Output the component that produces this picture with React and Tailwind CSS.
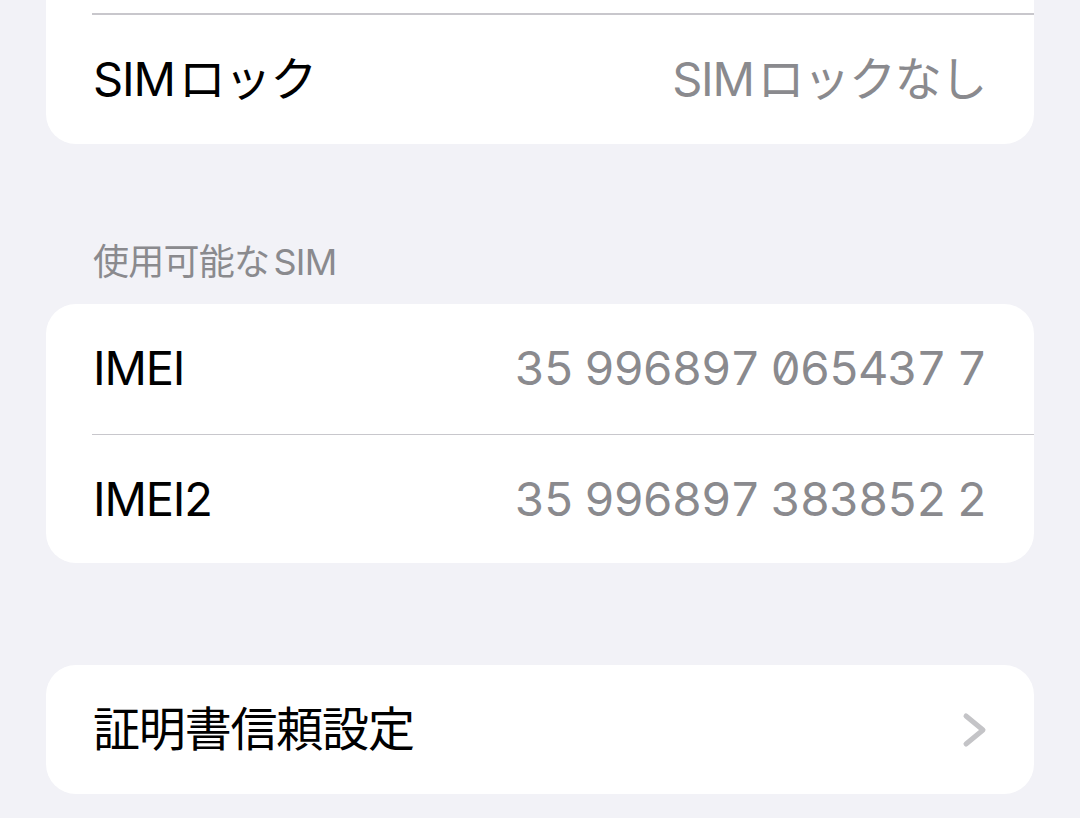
import React from "react";

const font = "font-['Inter','Noto_Sans_CJK_JP',sans-serif]";

function Row({ label, value, chevron, height = "h-[129px]" }) {
  return (
    <div className={`${height} flex items-center justify-between pl-[47px] pr-[48px]`}>
      <span className="text-[47px] text-black tracking-[-0.025em]">{label}</span>
      {value && (
        <span className="text-[47px] text-[#8a8a8e] tracking-[-0.028em] tabular-nums slashed-zero">
          {value}
        </span>
      )}
      {chevron && (
        <svg width="26" height="36" viewBox="0 0 26 36" className="mr-[-2px]">
          <polyline
            points="4,4 21,18 4,32"
            fill="none"
            stroke="#c4c4c7"
            strokeWidth="5"
            strokeLinecap="round"
            strokeLinejoin="round"
          />
        </svg>
      )}
    </div>
  );
}

function Divider() {
  return <div className="ml-[46px] h-[1.5px] bg-[#c8c7cc]" />;
}

export default function App() {
  return (
    <div className={`${font} h-[818px] overflow-hidden bg-[#f2f2f7] px-[46px]`}>
      {/* card cut off by the top edge */}
      <div className="-mt-[117px] rounded-[30px] bg-white">
        <div className="h-[130px]" />
        <Divider />
        <Row
          label={<>SIM<span className="ml-[4px]">ロック</span></>}
          value={<>SIM<span className="ml-[4px]">ロックなし</span></>}
        />
      </div>

      <div className="h-[160px] pt-[96px] pl-[47px]">
        <span className="text-[36px] leading-[44px] text-[#8a8a8e] tracking-[-0.02em]">
          使用可能な<span className="ml-[4px]">SIM</span>
        </span>
      </div>

      <div className="rounded-[30px] bg-white">
        <Row label="IMEI" value="35 996897 065437 7" height="h-[130px]" />
        <Divider />
        <Row label="IMEI2" value="35 996897 383852 2" height="h-[128px]" />
      </div>

      <div className="mt-[102px] rounded-[30px] bg-white">
        <Row label="証明書信頼設定" chevron />
      </div>
    </div>
  );
}
